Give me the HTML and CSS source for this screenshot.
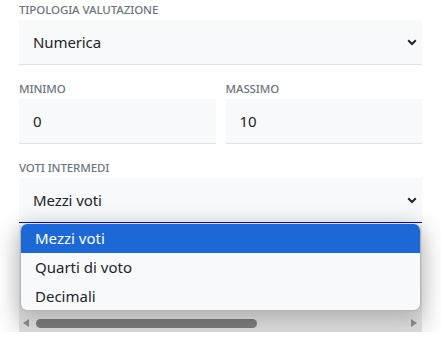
FILE: index.html
```html
<!DOCTYPE html>
<html lang="it">
<head>
<meta charset="utf-8">
<link rel="stylesheet" href="styles.css">
</head>
<body>
<div class="form">
  <div class="group">
    <div class="label">Tipologia valutazione</div>
    <div class="field select">
      <span>Numerica</span>
      <svg class="chev" width="10" height="7" viewBox="0 0 10 7"><path d="M1.2 1.2 L5 5 L8.8 1.2" fill="none" stroke="#212529" stroke-width="2"/></svg>
    </div>
  </div>
  <div class="row">
    <div class="group">
      <div class="label">Minimo</div>
      <div class="field"><span>0</span></div>
    </div>
    <div class="group">
      <div class="label">Massimo</div>
      <div class="field"><span>10</span></div>
    </div>
  </div>
  <div class="group last">
    <div class="label">Voti intermedi</div>
    <div class="field select focused">
      <span>Mezzi voti</span>
      <svg class="chev" width="10" height="7" viewBox="0 0 10 7"><path d="M1.2 1.2 L5 5 L8.8 1.2" fill="none" stroke="#212529" stroke-width="2"/></svg>
    </div>
    <div class="scrollarea">
      <div class="hscroll">
        <span class="arrow left"></span>
        <span class="thumb"></span>
        <span class="arrow right"></span>
      </div>
    </div>
    <div class="dropdown">
      <div class="opt active">Mezzi voti</div>
      <div class="opt">Quarti di voto</div>
      <div class="opt">Decimali</div>
    </div>
  </div>
</div>
</body>
</html>
```

FILE: styles.css
```css
html, body {
  margin: 0;
  padding: 0;
  background: #ffffff;
}
body {
  font-family: "Noto Sans", "Open Sans", sans-serif;
  color: #212529;
  overflow: hidden;
}
.form {
  padding: 2px 19px 0 19px;
  width: 403px;
  display: flex;
  flex-direction: column;
  gap: 16px;
}
.row {
  display: grid;
  grid-template-columns: 1fr 1fr;
  gap: 10px;
}
.group {
  display: flex;
  flex-direction: column;
  gap: 2px;
}
.group.last {
  position: relative;
}
.label {
  font-size: 11.5px;
  line-height: 16px;
  font-weight: 500;
  text-transform: uppercase;
  color: #6c757d;
  letter-spacing: -0.1px;
}
.field {
  height: 44px;
  background: #f8f9fa;
  border-bottom: 1px solid #dee2e6;
  display: flex;
  align-items: center;
  padding-left: 14px;
  padding-right: 5px;
  font-size: 15px;
  letter-spacing: -0.1px;
}
.select {
  justify-content: space-between;
}
.select .chev {
  margin-top: 1px;
}
.focused {
  border-bottom-color: #0000ff;
}
.scrollarea {
  height: 107px;
  background: linear-gradient(#e6e6e6, #d9d9d9);
  display: flex;
  align-items: flex-end;
  box-shadow: 0 4px 26px rgba(0,0,0,0.16);
}
.hscroll {
  height: 15px;
  width: 100%;
  display: flex;
  align-items: center;
  padding: 0 4px 3px 4px;
  box-sizing: border-box;
}
.arrow {
  width: 0;
  height: 0;
  border-top: 4px solid transparent;
  border-bottom: 4px solid transparent;
}
.arrow.left {
  border-right: 6px solid #8a8a8a;
}
.arrow.right {
  border-left: 6px solid #8a8a8a;
  margin-left: auto;
  margin-right: 1px;
}
.thumb {
  width: 221px;
  height: 9px;
  border-radius: 5px;
  background: #7a7a7a;
  margin-left: 7px;
}
.dropdown {
  position: absolute;
  left: 1px;
  right: 1px;
  top: 64px;
  height: 87px;
  box-sizing: border-box;
  background: #f8f9fa;
  border: 1px solid #b4b4b4;
  border-top: none;
  border-radius: 7px;
  overflow: hidden;
  box-shadow: 0 6px 22px rgba(0,0,0,0.22);
}
.opt {
  height: 29px;
  line-height: 29px;
  padding-left: 14px;
  font-size: 15px;
  color: #212529;
}
.opt.active {
  background: #1b68d6;
  color: #ffffff;
}
```
